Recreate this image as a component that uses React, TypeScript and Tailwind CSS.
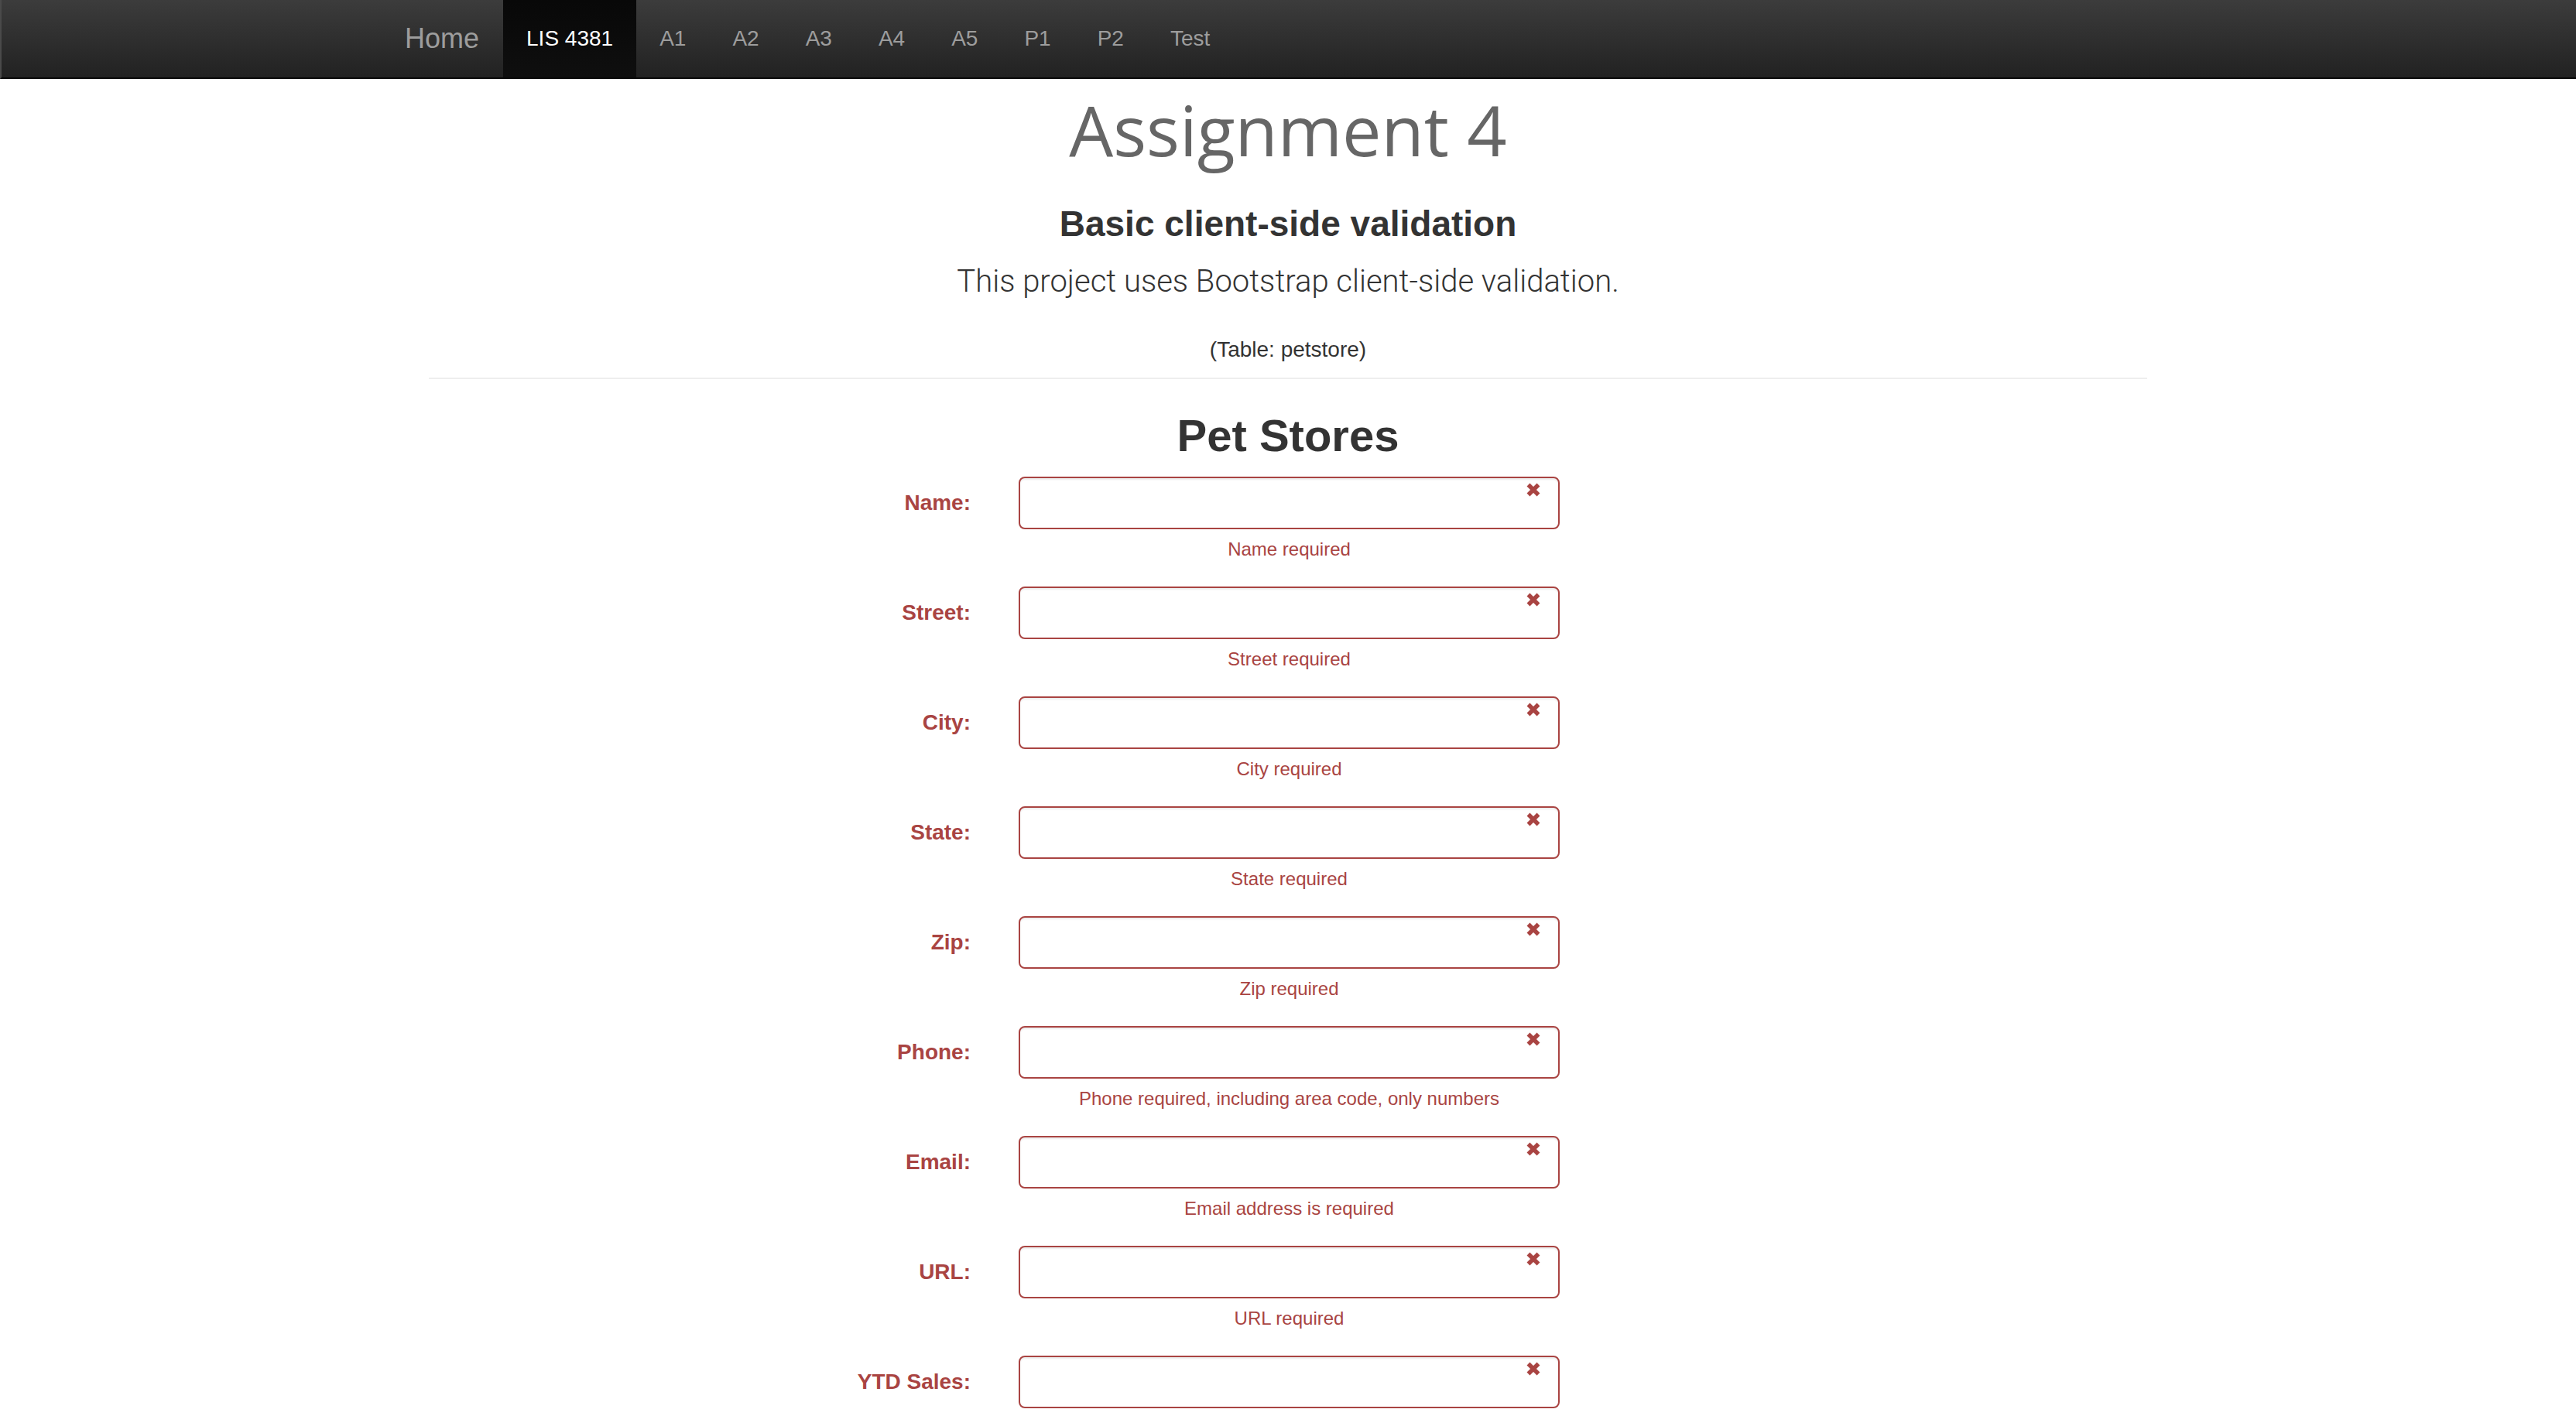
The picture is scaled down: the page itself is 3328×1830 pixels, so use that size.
const helv = "font-['Liberation_Sans',Arial,sans-serif]";

const navLinks = ['A1', 'A2', 'A3', 'A4', 'A5', 'P1', 'P2', 'Test'];

const fields = [
  { label: 'Name:', help: 'Name required' },
  { label: 'Street:', help: 'Street required' },
  { label: 'City:', help: 'City required' },
  { label: 'State:', help: 'State required' },
  { label: 'Zip:', help: 'Zip required' },
  { label: 'Phone:', help: 'Phone required, including area code, only numbers' },
  { label: 'Email:', help: 'Email address is required' },
  { label: 'URL:', help: 'URL required' },
  { label: 'YTD Sales:', help: '' },
];

function RemoveIcon() {
  return (
    <svg viewBox="0 0 18 18" className="w-[18px] h-[18px]">
      <path d="M2.5 2.5 L15.5 15.5 M15.5 2.5 L2.5 15.5" stroke="#a94442" strokeWidth="5.5" strokeLinecap="butt" />
    </svg>
  );
}

function Navbar() {
  return (
    <nav className="h-[102px] bg-gradient-to-b from-[#3c3c3c] to-[#222222] border-b-2 border-b-[#080808] border-l-2 border-l-[#4a4a4a]">
      <div className={`w-[2340px] mx-auto flex h-[100px] ${helv}`}>
        <a className="flex items-center pl-[28px] pr-[31px] text-[36px] text-[#9d9d9d]">Home</a>
        <a className="flex items-center px-[30px] text-[28px] text-white bg-gradient-to-b from-[#080808] to-[#0f0f0f]">
          LIS 4381
        </a>
        {navLinks.map((l) => (
          <a key={l} className="flex items-center px-[30px] text-[28px] text-[#9d9d9d]">
            {l}
          </a>
        ))}
      </div>
    </nav>
  );
}

export default function App() {
  return (
    <div className="min-h-screen bg-white">
      <Navbar />
      <div className="text-center text-[#333333]">
        <h1 className="mt-[20px] h-[90px] leading-none text-[90px] text-[#666666] font-['Open_Sans',sans-serif]">
          Assignment 4
        </h1>
        <h3 className={`mt-[54px] h-[46px] leading-none text-[46px] font-bold ${helv}`}>
          Basic client-side validation
        </h3>
        <p className="mt-[32px] h-[40px] leading-none text-[40px] font-light font-['Roboto',sans-serif]">
          This project uses Bootstrap client-side validation.
        </p>
        <p className={`mt-[54px] h-[28px] leading-none text-[28px] ${helv}`}>(Table: petstore)</p>
      </div>
      <hr className="mt-[22px] w-[2220px] mx-auto border-0 border-t-2 border-t-[#eeeeee]" />
      <h2 className={`mt-[44px] h-[60px] leading-none text-center text-[58px] font-bold text-[#333333] ${helv}`}>
        Pet Stores
      </h2>
      <form className={`mt-[22px] w-[2340px] mx-auto ${helv}`}>
        {fields.map((f) => (
          <div key={f.label} className="flex">
            <label className="w-[760px] h-[68px] flex items-center justify-end text-[28px] font-bold text-[#a94442]">
              {f.label}
            </label>
            <div className="ml-[62px] w-[699px]">
              <div className="relative h-[68px] border-2 border-[#a94442] rounded-[8px] shadow-[inset_0_2px_2px_rgba(0,0,0,0.075)]">
                <span className="absolute top-[6px] right-[23px]">
                  <RemoveIcon />
                </span>
              </div>
              {f.help && (
                <p className="mt-[9px] mb-[31px] leading-[34px] text-center text-[24px] text-[#a94442]">{f.help}</p>
              )}
            </div>
          </div>
        ))}
      </form>
    </div>
  );
}
